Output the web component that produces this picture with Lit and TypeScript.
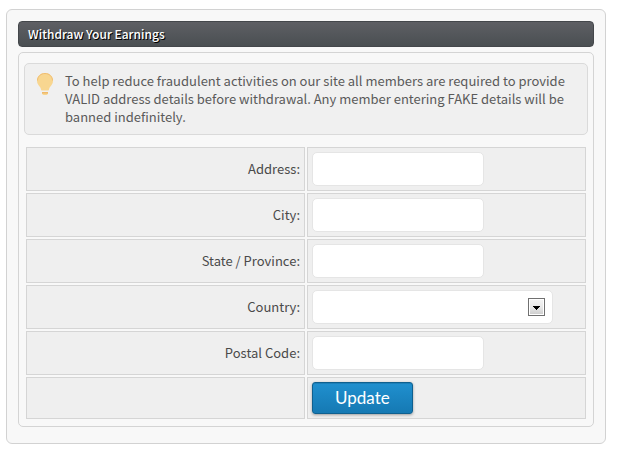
import { LitElement, html, css } from "lit";
import { customElement } from "lit/decorators.js";

@customElement("app-root")
export class AppRoot extends LitElement {
  static styles = css`
    :host {
      display: block;
      padding: 9px 17px 9px 6px;
      font: 13px/18px "Noto Sans CJK SC", "Noto Sans", sans-serif;
      color: #4a4a4a;
    }
    * {
      box-sizing: border-box;
    }
    .panel {
      padding: 11px 11px 16px;
      background: #f8f8f8;
      border: 1px solid #d2d2d2;
      border-radius: 6px;
    }
    .title {
      margin: 0 0 5px;
      padding: 3px 9px;
      border: 1px solid #44474b;
      border-radius: 4px;
      background: linear-gradient(#5e5f64, #4a4f52);
      color: #fff;
      font-size: 12px;
      line-height: 18px;
      font-weight: 500;
      text-shadow: 1px 1px 0 #000;
    }
    .content {
      padding: 10px 5px 5px;
      border: 1px solid #d4d4d4;
      border-radius: 5px;
    }
    .notice {
      display: flex;
      gap: 12px;
      margin-bottom: 10px;
      padding: 8px 12px;
      border: 1px solid #dadada;
      border-radius: 5px;
      background: #f0f0f0;
      color: #5a5a5a;
    }
    .notice p {
      margin: 0;
    }
    .bulb {
      flex: none;
      width: 16px;
      height: 24px;
    }
    .fields {
      width: 100%;
      table-layout: fixed;
      border-collapse: separate;
      border-spacing: 2px;
    }
    .cell {
      padding: 4px;
      border: 1px solid #d5d5d5;
      background: #efefef;
      text-align: left;
      font-weight: 400;
    }
    .name {
      text-align: right;
    }
    .field {
      display: block;
      width: 172px;
      height: 34px;
      padding: 0 8px;
      border: 1px solid #e5e5e5;
      border-radius: 5px;
      background: #fff;
      color: inherit;
      font: inherit;
    }
    .picker {
      display: grid;
      width: 241px;
      align-items: center;
    }
    .picker > * {
      grid-area: 1 / 1;
    }
    .choice {
      appearance: none;
      width: 100%;
    }
    .arrow {
      justify-self: end;
      margin-right: 8px;
      pointer-events: none;
    }
    .update {
      display: block;
      height: 32px;
      padding: 0 22px;
      border: 1px solid #0f608f;
      border-radius: 3px;
      background: linear-gradient(#2090cf, #1579b3);
      box-shadow: 0 1px 3px rgba(0, 0, 0, 0.35), inset 0 1px 0 #1b7fb8;
      color: #fff;
      font: 17px/30px Lato, sans-serif;
    }
  `;

  private row(id: string, label: string, control: unknown) {
    return html`<tr>
      <th class="cell name" scope="row"><label for=${id}>${label}:</label></th>
      <td class="cell">${control}</td>
    </tr>`;
  }

  private textRow(id: string, label: string) {
    return this.row(id, label, html`<input class="field" type="text" id=${id} name=${id} />`);
  }

  render() {
    return html`
      <section class="panel">
        <h1 class="title">Withdraw Your Earnings</h1>
        <form class="content" @submit=${(e: Event) => e.preventDefault()}>
          <div class="notice">
            <svg class="bulb" viewBox="0 0 16 24" aria-hidden="true">
              <path d="M8 1C3.5 1 0 4.400 0 8.700C0 12 2 13.500 3 15C4 16.500 4 18 4.500 18.500H11.500C12 18 12 16.500 13 15C14 13.500 16 12 16 8.700C16 4.400 12.500 1 8 1Z" fill="#f8d690" />
              <path d="M.5 8.500C.5 4.500 3.800 1.500 8 1.500S15.500 4.500 15.500 8.500" fill="none" stroke="#f0bd72" />
              <path d="M5 20H11V22L9.500 23H6.500L5 22Z" fill="#f8d690" />
              <path d="M5 20H11V21.500H5Z" fill="#efb96a" />
            </svg>
            <p>
              To help reduce fraudulent activities on our site all members are required to provide
              VALID address details before withdrawal. Any member entering FAKE details will be
              banned indefinitely.
            </p>
          </div>
          <table class="fields">
            <tbody>
              ${this.textRow("address", "Address")}
              ${this.textRow("city", "City")}
              ${this.textRow("state", "State / Province")}
              ${this.row(
                "country",
                "Country",
                html`<div class="picker">
                  <select class="field choice" id="country" name="country">
                    <option></option>
                  </select>
                  <svg class="arrow" width="17" height="18" viewBox="0 0 17 18" aria-hidden="true">
                    <defs>
                      <linearGradient id="face" x2="0" y2="1">
                        <stop offset="0" stop-color="#f3f3f3" />
                        <stop offset="0.5" stop-color="#e9e9e9" />
                        <stop offset="1" stop-color="#cfcfcf" />
                      </linearGradient>
                    </defs>
                    <rect x=".5" y=".5" width="16" height="17" fill="#fff" stroke="#707070" />
                    <rect x="2" y="2" width="13" height="14" fill="url(#face)" />
                    <path d="M5 8H12V9H11V10H10V11H9V12H8V11H7V10H6V9H5Z" fill="#000" shape-rendering="crispEdges" />
                  </svg>
                </div>`
              )}
              ${this.textRow("postal", "Postal Code")}
              <tr>
                <td class="cell"></td>
                <td class="cell"><button class="update" type="submit">Update</button></td>
              </tr>
            </tbody>
          </table>
        </form>
      </section>
    `;
  }
}
